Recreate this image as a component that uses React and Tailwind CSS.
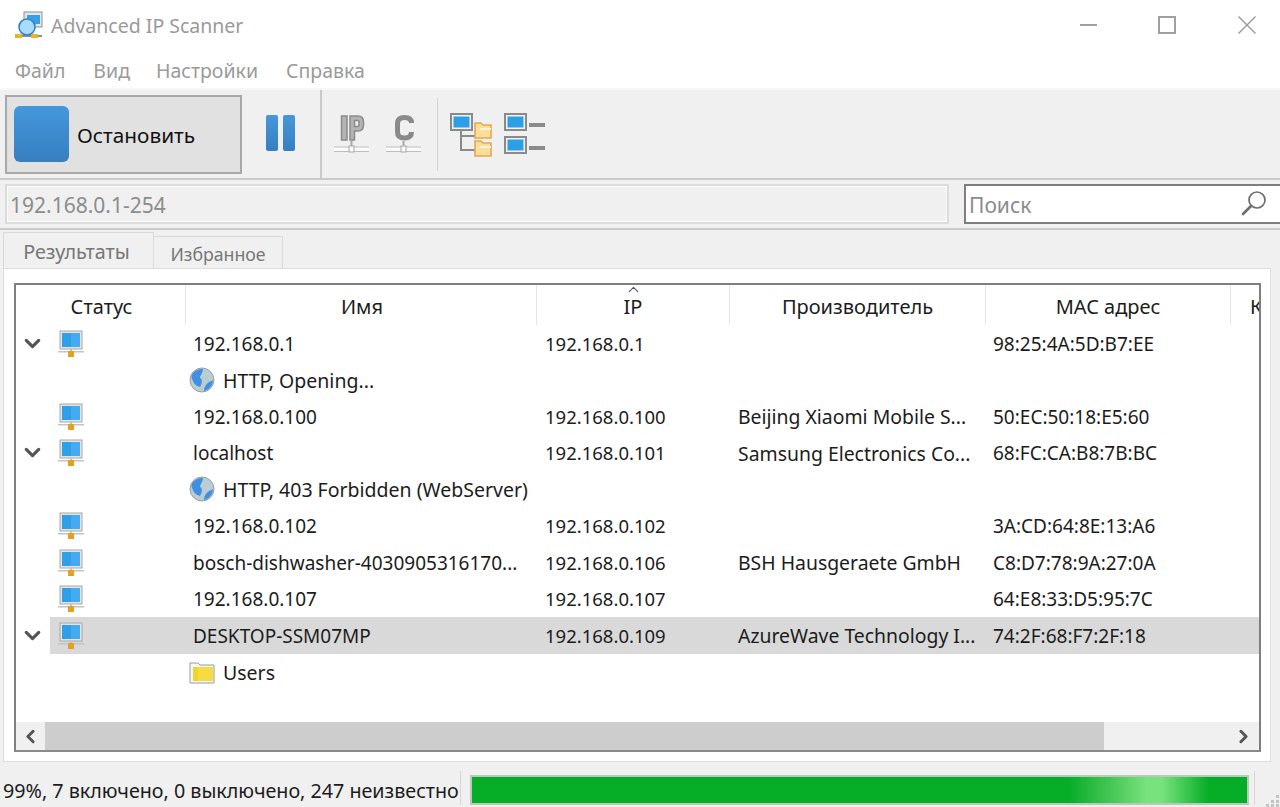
import React from 'react';
import { ChevronDown, ChevronLeft, ChevronRight, ChevronUp } from 'lucide-react';

const rows = [
  { name: '192.168.0.1', ip: '192.168.0.1', vendor: '', mac: '98:25:4A:5D:B7:EE', open: true },
  { sub: 'HTTP, Opening...', icon: 'globe' },
  { name: '192.168.0.100', ip: '192.168.0.100', vendor: 'Beijing Xiaomi Mobile S...', mac: '50:EC:50:18:E5:60' },
  { name: 'localhost', ip: '192.168.0.101', vendor: 'Samsung Electronics Co...', mac: '68:FC:CA:B8:7B:BC', open: true },
  { sub: 'HTTP, 403 Forbidden (WebServer)', icon: 'globe' },
  { name: '192.168.0.102', ip: '192.168.0.102', vendor: '', mac: '3A:CD:64:8E:13:A6' },
  { name: 'bosch-dishwasher-4030905316170...', ip: '192.168.0.106', vendor: 'BSH Hausgeraete GmbH', mac: 'C8:D7:78:9A:27:0A' },
  { name: '192.168.0.107', ip: '192.168.0.107', vendor: '', mac: '64:E8:33:D5:95:7C' },
  { name: 'DESKTOP-SSM07MP', ip: '192.168.0.109', vendor: 'AzureWave Technology I...', mac: '74:2F:68:F7:2F:18', open: true, selected: true },
  { sub: 'Users', icon: 'folder' },
];

const HostIcon = () => (
  <svg width="26" height="28" viewBox="0 0 26 28">
    <rect x="2" y="1" width="22" height="18" fill="#e4e4e4" stroke="#a8a8a8" />
    <rect x="4" y="3" width="18" height="14" fill="#2f9fe8" />
    <rect x="13" y="3" width="9" height="14" fill="#45aaf0" />
    <rect x="0" y="21" width="26" height="1.5" fill="#c4c4c4" />
    <rect x="12" y="18" width="2" height="4" fill="#c4c4c4" />
    <rect x="10" y="21" width="6" height="6" fill="#e3a11d" />
  </svg>
);

const GlobeIcon = () => (
  <svg width="26" height="26" viewBox="0 0 26 26">
    <circle cx="13" cy="13" r="12" fill="#b9cdd3" stroke="#9a9fa3" />
    <path d="M4 6 C8 2 12 2 14 2 C14 6 11 8 11 11 C14 12 13 17 11 20 C7 19 5 17 4 14 C2 11 2 8 4 6 Z" fill="#3f8fe3" />
    <path d="M24 13 C24 18 20 23 15 24 C15 20 17 17 20 15 C22 14 23 14 24 13 Z" fill="#3f8fe3" />
  </svg>
);

const FolderIcon = () => (
  <svg width="26" height="24" viewBox="0 0 26 24">
    <path d="M1 3 H9 L11 5 H25 V23 H1 Z" fill="#f8f8f8" stroke="#9a9a9a" />
    <path d="M4 7 H24 V21 H4 Z" fill="#f6dc3e" />
    <path d="M4 7 H9 V21 H4 Z" fill="#f2d22e" />
  </svg>
);

const PlugLine = () => (
  <g>
    <rect x="0" y="33" width="35" height="4" fill="#fafafa" />
    <rect x="0" y="32.5" width="35" height="1" fill="#bdbdbd" />
    <rect x="0" y="37" width="35" height="1" fill="#bdbdbd" />
    <rect x="15" y="32" width="5" height="6" fill="#fafafa" stroke="#a8a8a8" />
    <rect x="16.5" y="27" width="2" height="5" fill="#a8a8a8" />
  </g>
);

const FolderMini = ({ x, y }) => (
  <g>
    <path d={`M${x} ${y} h6 l2 2 h8 v13 h-16 Z`} fill="#fbdd9c" stroke="#e3a84f" strokeWidth="1.6" />
    <path d={`M${x + 3} ${y + 7} h13 v-2 h-10 Z`} fill="#fff3d4" />
  </g>
);

const Screen = ({ x, y }) => (
  <g>
    <rect x={x} y={y} width="21" height="16" fill="#f2f2f2" stroke="#8a8a8a" strokeWidth="2" />
    <rect x={x + 2.5} y={y + 2.5} width="16" height="11" fill="#2c9fe6" />
  </g>
);

const Cell = ({ w, className = '', children }) => (
  <div className={`shrink-0 overflow-hidden whitespace-nowrap ${className}`} style={{ width: w }}>
    {children}
  </div>
);

const Row = ({ row }) => {
  if (row.sub) {
    const Icon = row.icon === 'globe' ? GlobeIcon : FolderIcon;
    return (
      <div className="flex h-[36.5px] items-center pl-[173px]">
        <Icon />
        <span className="ml-[8px] whitespace-nowrap pt-[1px] text-[19.5px]">{row.sub}</span>
      </div>
    );
  }
  return (
    <div className="flex h-[36.5px] items-center">
      <div className="flex h-full w-[34px] shrink-0 items-center pl-[4px]">
        {row.open && <ChevronDown size={25} strokeWidth={3} className="text-[#555555]" />}
      </div>
      <div className={`flex h-full flex-1 items-center pt-[1px] ${row.selected ? 'bg-[#d9d9d9]' : ''}`}>
        <Cell w={136} className="pl-[8px]"><HostIcon /></Cell>
        <Cell w={351} className="pl-[7px]">{row.name}</Cell>
        <Cell w={193} className="pl-[8px] text-[18.5px]">{row.ip}</Cell>
        <Cell w={256} className="pl-[8px] text-[19.4px]">{row.vendor}</Cell>
        <Cell w={240} className="pl-[7px]">{row.mac}</Cell>
      </div>
    </div>
  );
};

const HeaderCell = ({ w, children }) => (
  <div className="relative flex h-full shrink-0 items-center justify-center border-r border-[#e4e4e4] pt-[3px]" style={{ width: w }}>
    {children}
  </div>
);

export default function App() {
  return (
    <div className="flex h-[807px] w-[1280px] flex-col overflow-hidden bg-white text-[19px] text-[#1c1c1c] [font-family:'Noto_Sans',sans-serif]">
      {/* title bar */}
      <div className="flex h-[50px] items-center pl-[14px] text-[#9a9a9a]">
        <svg width="30" height="28" viewBox="0 0 30 28">
          <rect x="10" y="1" width="18" height="15" fill="#e6e6e6" stroke="#8e8e8e" />
          <rect x="13" y="4" width="13" height="9" fill="#38a0e8" />
          <rect x="2" y="24" width="26" height="2" fill="#8c8c8c" />
          <circle cx="13" cy="16" r="8" fill="#a9dcfb" stroke="#2f82d0" strokeWidth="1.6" />
          <rect x="1" y="23" width="7" height="4" fill="#e5b52c" />
          <rect x="17" y="23" width="7" height="4" fill="#e5b52c" />
        </svg>
        <span className="ml-[7px] pt-[2px] text-[19.5px]">Advanced IP Scanner</span>
        <div className="ml-auto flex items-center">
          <div className="mr-[61px] h-[2px] w-[17px] bg-[#a0a0a0]" />
          <div className="mr-[62px] h-[18px] w-[18px] border-2 border-[#a0a0a0]" />
          <svg className="mr-[24px]" width="18" height="18" viewBox="0 0 18 18">
            <path d="M0.5 0.5 L17.5 17.5 M17.5 0.5 L0.5 17.5" stroke="#9a9a9a" strokeWidth="1.4" />
          </svg>
        </div>
      </div>

      {/* menu */}
      <div className="flex h-[38px] items-center gap-[28px] pl-[15px] pt-[3px] text-[19.5px] text-[#9a9a9a]">
        <span>Файл</span>
        <span>Вид</span>
        <span className="-ml-[2px]">Настройки</span>
        <span>Справка</span>
      </div>
      <div className="h-[2px] bg-[#f7f7f7]" />

      {/* toolbar */}
      <div className="flex h-[88px] items-center bg-[#f0f0f0]">
        <div className="ml-[5px] flex h-[79px] w-[237px] items-center border-2 border-[#a8a8a8] bg-[#e1e1e1] pl-[7px]">
          <div className="h-[56px] w-[55px] rounded-[6px] bg-gradient-to-b from-[#4597dc] to-[#367fc0]" />
          <span className="ml-[8px] pt-[3px] text-[20.8px] text-[#111111]">Остановить</span>
        </div>
        <div className="mb-[3px] ml-[24px] flex h-[36px] gap-[5px]">
          <div className="w-[12px] rounded-[2px] bg-gradient-to-b from-[#4597dc] to-[#367fc0]" />
          <div className="w-[12px] rounded-[2px] bg-gradient-to-b from-[#4597dc] to-[#367fc0]" />
        </div>
        <div className="ml-[25px] h-full w-[2px] bg-[#c9c9c9]" />
        <svg className="ml-[12px]" width="36" height="40" viewBox="0 0 36 40">
          <rect x="7.5" y="2" width="5.5" height="24" fill="#b4b4b4" stroke="#8a8a8a" strokeWidth="1.5" />
          <path d="M16 26 V2 H24 Q29.5 2 29.5 8 V11 Q29.5 17 24 17 H20.5 V26 Z M20.5 6.5 V12.5 H23.5 Q25 12.5 25 11 V8 Q25 6.5 23.5 6.5 Z" fill="#b4b4b4" stroke="#8a8a8a" strokeWidth="1.5" fillRule="evenodd" />
          <PlugLine />
        </svg>
        <svg className="ml-[16px]" width="36" height="40" viewBox="0 0 36 40">
          <path d="M25.5 9 Q25.5 3.5 18.5 3.5 Q11.5 3.5 11.5 9.5 V18 Q11.5 24 18.5 24 Q25.5 24 25.5 18" fill="none" stroke="#8a8a8a" strokeWidth="5" />
          <PlugLine />
        </svg>
        <div className="ml-[15px] h-[73px] w-[1px] bg-[#d3d3d3]" />
        <svg className="ml-[12px] mt-[1px]" width="42" height="44" viewBox="0 0 42 44">
          <Screen x={1} y={1} />
          <path d="M11 18 V37 H25 M11 23 H25" fill="none" stroke="#8a8a8a" strokeWidth="2" />
          <FolderMini x={25} y={10} />
          <FolderMini x={25} y={28} />
        </svg>
        <svg className="ml-[12px] mt-[1px]" width="42" height="44" viewBox="0 0 42 44">
          <Screen x={1} y={1} />
          <rect x="25" y="10" width="16" height="4" fill="#8a8a8a" />
          <Screen x={1} y={24} />
          <rect x="25" y="33" width="16" height="4" fill="#8a8a8a" />
        </svg>
      </div>

      {/* address bar */}
      <div className="flex h-[52px] items-center border-y-2 border-[#c9c9c9] bg-[#f0f0f0] pl-[5px]">
        <div className="flex h-[40px] w-[944px] items-center border-2 border-[#dcdcdc] pl-[3px] pt-[4px] text-[21px] text-[#8c8c8c] shadow-[inset_0_0_0_1px_#fafafa]">
          192.168.0.1-254
        </div>
        <div className="ml-[15px] flex h-[40px] flex-1 items-center border-2 border-r-0 border-[#7e7e7e] bg-white pl-[3px] text-[21px] text-[#8c8c8c]">
          <span className="pt-[4px]">Поиск</span>
          <svg className="ml-auto mb-[2px] mr-[13px]" width="26" height="26" viewBox="0 0 26 26">
            <circle cx="16" cy="10" r="8" fill="none" stroke="#6e6e6e" strokeWidth="1.7" />
            <path d="M10 16 L2 24" stroke="#6e6e6e" strokeWidth="2.6" strokeLinecap="round" />
          </svg>
        </div>
      </div>

      {/* tabs */}
      <div className="flex h-[38px] items-end bg-[#f0f0f0] pl-[3px] text-[#777777]">
        <div className="flex h-[36px] w-[151px] items-center justify-center border border-b-0 border-[#d9d9d9] pr-[4px] pt-[3px] text-[19.8px]">Результаты</div>
        <div className="flex h-[32px] w-[129px] items-center justify-center border border-b-0 border-l-0 border-[#d9d9d9] pt-[3px] text-[17.7px]">Избранное</div>
      </div>

      {/* panel */}
      <div className="flex h-[494px] bg-[#f0f0f0] pl-[3px] pr-[10px]">
        <div className="flex-1 border border-[#dedede] bg-white pb-[9px] pl-[10px] pr-[9px] pt-[14px]">
          <div className="flex h-full w-[1247px] flex-col overflow-hidden border-2 border-[#7f7f7f] border-b-[#8a8a8a]">
            <div className="flex h-[40px] shrink-0 items-center text-[20px]">
              <HeaderCell w={170}><span className="pl-[2px]">Статус</span></HeaderCell>
              <HeaderCell w={351}><span className="pl-[2px]">Имя</span></HeaderCell>
              <HeaderCell w={193}>
                IP
                <ChevronUp size={17} strokeWidth={1.6} className="absolute left-[88px] top-[-4px] text-[#555555]" />
              </HeaderCell>
              <HeaderCell w={256}>Производитель</HeaderCell>
              <HeaderCell w={245}>MAC адрес</HeaderCell>
              <div className="pl-[19px] pt-[3px]">К</div>
            </div>
            <div className="flex-1 overflow-hidden">
              {rows.map((row, i) => <Row key={i} row={row} />)}
            </div>
            <div className="flex h-[28px] shrink-0 items-center bg-[#f0f0f0]">
              <div className="flex h-full w-[29px] items-center justify-center">
                <ChevronLeft size={21} strokeWidth={3.4} className="text-[#555555]" />
              </div>
              <div className="h-full w-[1059px] bg-[#cdcdcd]" />
              <ChevronRight size={21} strokeWidth={3.4} className="ml-auto mr-[5px] text-[#555555]" />
            </div>
          </div>
        </div>
      </div>

      {/* status bar */}
      <div className="relative flex flex-1 items-start bg-[#f0f0f0] pl-[3px] pt-[9px]">
        <span className="mt-[7px] w-[457px] whitespace-nowrap text-[19.7px] leading-[26px]">99%, 7 включено, 0 выключено, 247 неизвестно</span>
        <div className="h-[34px] w-[1px] bg-[#d6d6d6]" />
        <div className="ml-[9px] mt-[4px] h-[30px] w-[779px] border-2 border-[#b9c9bb] bg-[linear-gradient(90deg,#06ae28_0%,#06ae28_77%,#4cc95a_83%,#78e27c_87%,#78e27c_89%,#06ae28_95%,#06ae28_100%)]" />
        <div className="ml-[5px] h-[34px] w-[1px] bg-[#d6d6d6]" />
        <svg className="absolute bottom-0 right-0" width="14" height="14" viewBox="0 0 14 14">
          <path d="M10 2h3v3h-3z M5 7h3v3h-3z M10 7h3v3h-3z M0 11h3v3h-3z M5 11h3v3h-3z M10 11h3v3h-3z" fill="#c4c4c4" />
        </svg>
      </div>
    </div>
  );
}
